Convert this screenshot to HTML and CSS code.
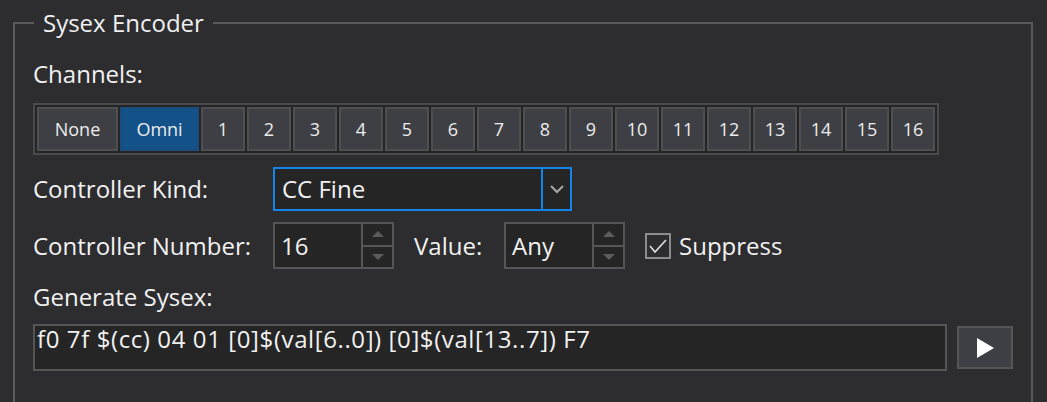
FILE: index.html
```html
<!DOCTYPE html>
<html lang="en">

<head>
    <meta charset="UTF-8">
    <meta name="viewport" content="width=device-width, initial-scale=1.0">
    <title>Sysex Encoder</title>
    <link rel="stylesheet" href="styles.css">
</head>

<body>
    <fieldset class="group">
        <legend>Sysex Encoder</legend>

        <div class="label channelsLabel">Channels:</div>
        <div class="channels">
            <button class="ch wide none">None</button>
            <button class="ch wide active">Omni</button>
            <button class="ch">1</button>
            <button class="ch">2</button>
            <button class="ch">3</button>
            <button class="ch">4</button>
            <button class="ch">5</button>
            <button class="ch">6</button>
            <button class="ch">7</button>
            <button class="ch">8</button>
            <button class="ch">9</button>
            <button class="ch">10</button>
            <button class="ch">11</button>
            <button class="ch">12</button>
            <button class="ch">13</button>
            <button class="ch">14</button>
            <button class="ch">15</button>
            <button class="ch">16</button>
        </div>

        <!-- controller kind -->
        <div class="row kindRow">
            <span class="label col">Controller Kind:</span>
            <div class="combo">
                <span class="comboText">CC Fine</span>
                <span class="comboBtn">
                    <svg width="16" height="10" viewBox="0 0 16 10">
                        <polyline points="2,2 8,8 14,2" fill="none" stroke="#a8a8a8" stroke-width="2" />
                    </svg>
                </span>
            </div>
        </div>

        <!-- controller number / value -->
        <div class="row numberRow">
            <span class="label col">Controller Number:</span>
            <div class="spin">
                <span class="spinText">16</span>
                <span class="spinBtns"><span class="up"><i></i></span><span class="down"><i></i></span></span>
            </div>
            <span class="label valueLabel">Value:</span>
            <div class="spin">
                <span class="spinText">Any</span>
                <span class="spinBtns"><span class="up"><i></i></span><span class="down"><i></i></span></span>
            </div>
            <label class="check">
                <span class="box">
                    <svg width="22" height="22" viewBox="0 0 22 22">
                        <polyline points="3,11 8,17 19,5" fill="none" stroke="#e2e2e2" stroke-width="1.6" />
                    </svg>
                </span>
                <span class="label">Suppress</span>
            </label>
        </div>

        <div class="label genLabel">Generate Sysex:</div>
        <div class="row sysexRow">
            <div class="textbox">f0 7f $(cc) 04 01 [0]$(val[6..0]) [0]$(val[13..7]) F7</div>
            <button class="play">
                <svg width="20" height="22" viewBox="0 0 20 22">
                    <polygon points="2,1 19,11 2,21" fill="#ffffff" />
                </svg>
            </button>
        </div>
    </fieldset>
</body>

</html>
```
FILE: styles.css
```css
body {
    margin: 0;
    background-color: #2d2d30;
    font-family: "Open Sans", "Noto Sans", sans-serif;
    color: #f1f1f1;
}
.group {
    margin: 7px 14px 0 13px;
    border: 2px solid #595959;
    padding: 0 18px 60px 18px;
}
.group>legend {
    margin-left: 1px;
    padding: 0 9px;
    font-size: 24px;
    line-height: 32px;
    color: #f0f0f0;
}
.label {
    font-size: 24px;
    line-height: 32px;
    white-space: nowrap;
}
.channelsLabel {
    margin-top: 19px;
}
.channels {
    display: inline-flex;
    gap: 2px;
    margin-top: 13px;
    padding: 2px;
    border: 2px solid #4a4a4c;
    background-color: #252527;
    vertical-align: top;
}
.ch {
    width: 44px;
    height: 44px;
    padding: 0;
    box-sizing: border-box;
    border: 2px solid #4f4f52;
    background-color: #3e3f44;
    color: #ececec;
    font-family: "Open Sans", "Noto Sans", sans-serif;
    font-size: 18px;
}
.ch.wide {
    width: 79px;
}
.ch.none {
    width: 81px;
}
.ch.active {
    background-color: #125289;
    border-color: #1b4c7b;
}
.row {
    display: flex;
    align-items: center;
}
.col {
    width: 240px;
}
.kindRow {
    margin-top: 12px;
}
.numberRow {
    margin-top: 11px;
}
.combo {
    display: flex;
    width: 299px;
    height: 44px;
    box-sizing: border-box;
    border: 2px solid #1384ea;
    background-color: #252526;
}
.comboText {
    flex: 1;
    padding-left: 7px;
    font-size: 24px;
    line-height: 40px;
}
.comboBtn {
    width: 27px;
    border-left: 2px solid #1384ea;
    display: flex;
    align-items: center;
    justify-content: center;
}
.spin {
    display: flex;
    width: 121px;
    height: 47px;
    box-sizing: border-box;
    border: 2px solid #555555;
    background-color: #252526;
}
.spinText {
    flex: 1;
    padding-left: 6px;
    font-size: 24px;
    line-height: 43px;
}
.spinBtns {
    width: 29px;
    border-left: 2px solid #555555;
    display: flex;
    flex-direction: column;
}
.spinBtns>span {
    flex: 1;
    display: flex;
    align-items: center;
    justify-content: center;
}
.spinBtns>.down {
    border-top: 2px solid #555555;
}
.up>i {
    border-left: 6px solid transparent;
    border-right: 6px solid transparent;
    border-bottom: 6px solid #5c5c5c;
}
.down>i {
    border-left: 6px solid transparent;
    border-right: 6px solid transparent;
    border-top: 6px solid #5c5c5c;
}
.valueLabel {
    margin-left: 20px;
    width: 90px;
}
.check {
    display: flex;
    align-items: center;
    margin-left: 20px;
    gap: 8px;
}
.check>.box {
    width: 26px;
    height: 26px;
    box-sizing: border-box;
    border: 2px solid #8c8c8c;
    display: flex;
    align-items: center;
    justify-content: center;
}
.genLabel {
    margin-top: 12px;
}
.sysexRow {
    margin-top: 11px;
}
.textbox {
    width: 914px;
    height: 47px;
    box-sizing: border-box;
    border: 2px solid #555555;
    background-color: #252526;
    padding: 0 2px;
    font-size: 24px;
    line-height: 25px;
    letter-spacing: 0.6px;
    white-space: nowrap;
}
.play {
    margin-left: 10px;
    width: 56px;
    height: 43px;
    box-sizing: border-box;
    border: 2px solid #555555;
    background-color: #3e3f44;
    padding: 0;
    display: flex;
    align-items: center;
    justify-content: center;
}
```
